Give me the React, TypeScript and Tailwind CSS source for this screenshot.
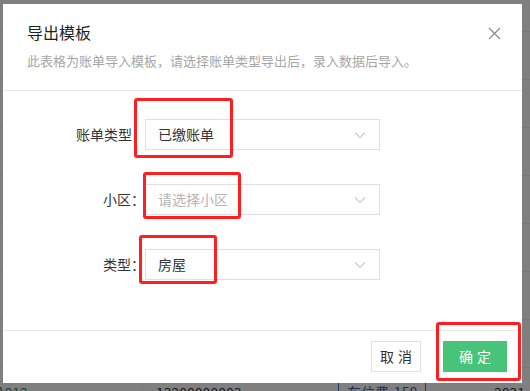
import React from "react";

const cjk = { fontFamily: '"Noto Sans CJK SC", "Liberation Sans", sans-serif' };

const Chevron = () => (
  <svg width="12" height="8" viewBox="0 0 12 8" fill="none">
    <polyline points="1,1.5 6,6.5 11,1.5" stroke="#c8cbd1" strokeWidth="1.1" />
  </svg>
);

const Select = ({ value, placeholder }: { value?: string; placeholder?: string }) => (
  <div className="flex items-center justify-between w-[235px] h-[31px] border border-[#dcdfe6] bg-white pl-[12px] pr-[13px]">
    <span className={value ? "text-[14px] text-[#333]" : "text-[14px] text-[#b4b4b4]"}>
      {value || placeholder}
    </span>
    <Chevron />
  </div>
);

const Row = ({ label, pr, children }: { label: string; pr: string; children: React.ReactNode }) => (
  <div className="flex items-center">
    <div className={`w-[142px] text-right text-[14px] text-[#333] ${pr}`}>{label}</div>
    {children}
  </div>
);

const BgPage = () => {
  const rows = Array.from({ length: 8 });
  return (
    <div className="absolute inset-0 bg-white overflow-hidden">
      <div className="-mt-[16px]">
        {rows.map((_, i) => (
          <div key={i} className="h-[48px] border-b border-[#ebeef5]" />
        ))}
        <div className="flex items-center h-[48px] text-[14px] text-[#333]">
          <div className="w-[146px] -ml-[4px] text-[#2e8b57]">A012</div>
          <div className="w-[192px] pl-[13px] border-l border-[#ebeef5] h-full flex items-center">13200000003</div>
          <div className="w-[160px] pl-[4px] h-full flex items-center">
            <span className="border border-[#3a7bd5] text-[#2a62b8] px-[8px] leading-[22px]">车位费-150</span>
          </div>
          <div>2021</div>
        </div>
      </div>
      <div className="absolute inset-0 bg-black/50" />
    </div>
  );
};

export default function App() {
  return (
    <div className="relative w-[530px] h-[391px] overflow-hidden" style={cjk}>
      <BgPage />
      <div className="absolute left-[3px] top-[4px] w-[519px] h-[379px] bg-white flex flex-col">
        <div className="h-[87px] border-b border-[#e8e8e8] px-[24px] pt-[17px] relative">
          <div className="text-[16px] leading-[22px] text-[#1f1f1f]">导出模板</div>
          <div className="mt-[9px] text-[13px] leading-[17px] text-[#a6a6a6]">
            此表格为账单导入模板，请选择账单类型导出后，录入数据后导入。
          </div>
          <svg className="absolute right-[21px] top-[23px]" width="13" height="13" viewBox="0 0 13 13">
            <path d="M1 1L12 12M12 1L1 12" stroke="#8c8c8c" strokeWidth="1.3" />
          </svg>
        </div>
        <div className="h-[240px] border-b border-[#e8e8e8] pt-[28px] flex flex-col gap-[34px]">
          <Row label="账单类型" pr="pr-[13px]">
            <Select value="已缴账单" />
          </Row>
          <Row label="小区：" pr="pr-0">
            <Select placeholder="请选择小区" />
          </Row>
          <Row label="类型：" pr="pr-0">
            <Select value="房屋" />
          </Row>
        </div>
        <div className="flex-1 flex items-start justify-end gap-[22px] pt-[10px] pr-[15px]">
          <button className="w-[50px] h-[31px] border border-[#dcdfe6] text-[14px] text-[#333] tracking-[4px] pl-[4px]">
            取消
          </button>
          <button className="w-[64px] h-[31px] bg-[#47c47a] text-[14px] text-white tracking-[4px] pl-[4px]">
            确定
          </button>
        </div>
      </div>
      <div className="absolute left-[134px] top-[98px] w-[99px] h-[60px] border-[3px] border-[#ff1f1f] rounded-[3px]" />
      <div className="absolute left-[143px] top-[172px] w-[98px] h-[47px] border-[3px] border-[#ff1f1f] rounded-[3px]" />
      <div className="absolute left-[139px] top-[235px] w-[78px] h-[49px] border-[3px] border-[#ff1f1f] rounded-[3px]" />
      <div className="absolute left-[436px] top-[322px] w-[85px] h-[59px] border-[3px] border-[#ff1f1f] rounded-[3px]" />
    </div>
  );
}
